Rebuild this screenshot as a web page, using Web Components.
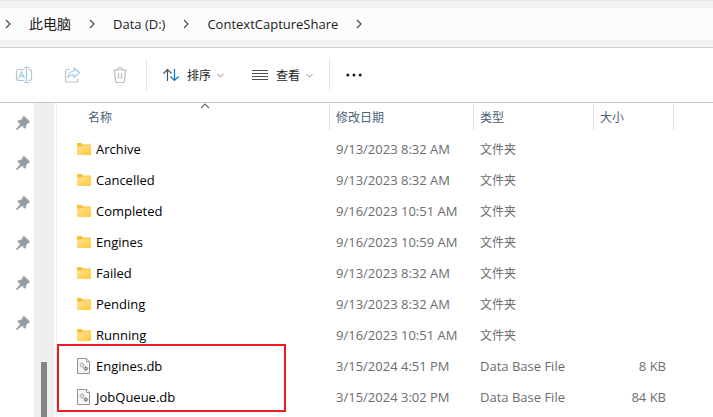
<!DOCTYPE html>
<html lang="zh-CN">
<head>
<meta charset="UTF-8">
<meta name="viewport" content="width=device-width, initial-scale=1.0">
<title>ContextCaptureShare</title>
<style>
  body {
    margin: 0;
    background: #fff;
    color: #1b1b1b;
    font-family: "Open Sans", "Noto Sans CJK SC", sans-serif;
    font-size: 12px;
  }
</style>
</head>
<body>
<file-explorer>
  <address-bar slot="address">
    <path-item lang="zh-CN">此电脑</path-item>
    <path-item lang="en">Data (D:)</path-item>
    <path-item lang="en">ContextCaptureShare</path-item>
  </address-bar>
  <command-bar slot="commands"></command-bar>
  <quick-pins slot="side" count="6"></quick-pins>
  <file-list slot="files"></file-list>
</file-explorer>

<script>
const ICONS = {
  chevron: `<svg width="6" height="10" viewBox="0 0 6 10" fill="none" stroke="#444" stroke-width="1.1"><path d="M1 1l4 4-4 4"/></svg>`,
  down: `<svg width="7" height="5" viewBox="0 0 7 5" fill="none" stroke="#888"><path d="M.5 1l3 3 3-3"/></svg>`,
  up: `<svg width="10" height="6" viewBox="0 0 10 6" fill="none" stroke="#666" stroke-width="1.1"><path d="M1 5l4-4 4 4"/></svg>`,
  rename: `<svg width="18" height="18" viewBox="0 0 18 18" fill="none"><path d="M9.5 3.5H4A2.500 2.500 0 0 0 1.500 6v6A2.500 2.500 0 0 0 4 14.500h5.500M13.500 3.500H14A2.500 2.500 0 0 1 16.500 6v6a2.500 2.500 0 0 1-2.500 2.500h-.5" stroke="#c3c3c3" stroke-width="1.2"/><path d="M3.500 12.500l3-7 3 7M4.500 10.200h4M11.500 1.500v15M9 1.500h5M9 16.500h5" stroke="#9fcdf0" stroke-width="1.2"/></svg>`,
  share: `<svg width="18" height="18" viewBox="0 0 18 18" fill="none" stroke-linejoin="round"><path d="M7 3.500H4.500a2 2 0 0 0-2 2v8.500a2 2 0 0 0 2 2h8.500a2 2 0 0 0 2-2v-1.500" stroke="#c3c3c3" stroke-width="1.2"/><path d="M11 2l5.500 4.800L11 11.500V9c-2.500-.2-4.500.5-6 2.500.3-3.500 2-6 6-6.500z" stroke="#9fcdf0" stroke-width="1.2"/></svg>`,
  trash: `<svg width="18" height="18" viewBox="0 0 18 18" fill="none" stroke="#bdbdbd" stroke-width="1.2"><path d="M2 4h14M6.500 4a2.500 2.500 0 0 1 5 0M3.500 4l1 11a1.500 1.500 0 0 0 1.500 1.500h6a1.500 1.500 0 0 0 1.500-1.500l1-11M7.500 7.500v5.500M10.500 7.500v5.500"/></svg>`,
  sort: `<svg width="16" height="14" viewBox="0 0 16 14" fill="none" stroke-width="1.2"><path d="M.5 5.500l4-4 4 4M4.500 1.500v11.500" stroke="#4d4d4d"/><path d="M7.500 8.500l4 4 4-4M11.500 1v11.500" stroke="#0078d4"/></svg>`,
  view: `<svg width="16" height="12" viewBox="0 0 16 12" stroke="#4d4d4d"><path d="M0 1.500h16M0 4.500h16M0 7.500h16M0 10.500h16"/></svg>`,
  more: `<svg width="16" height="4" viewBox="0 0 16 4" fill="#1b1b1b"><circle cx="1.800" cy="2" r="1.500"/><circle cx="8" cy="2" r="1.500"/><circle cx="14.200" cy="2" r="1.500"/></svg>`,
  pin: `<svg width="14" height="14" viewBox="0 0 14 14" fill="#929da5"><path d="M7 .6c.5-.6 1.200-.6 1.700-.1l4.800 4.700c.5.5.4 1.300-.3 1.600l-2.500 1.400-.9 3.600c-.2.8-1 .9-1.600.4L5.900 9.800 1.500 13.700l-1.400.2.300-1.300L4.200 8.200 1.900 5.900c-.5-.5-.4-1.300.4-1.500l3.300-.9z"/></svg>`,
  folder: `<svg width="16" height="16" viewBox="0 0 16 16"><defs><linearGradient id="g" x1="0" y1="0" x2="1" y2="1"><stop offset="0" stop-color="#ffe398"/><stop offset="1" stop-color="#ffc937"/></linearGradient></defs><path d="M1 3a1 1 0 0 1 1-1h3.300l1.500 1.500H14a1 1 0 0 1 1 1V8H1z" fill="#f9bd2c"/><path d="M1 5.500h4.500L7 4.500h7.200a.8.8 0 0 1 .8.8V13.200a.8.8 0 0 1-.8.8H1.800a.8.8 0 0 1-.8-.8z" fill="url(#g)"/></svg>`,
  db: `<svg width="16" height="16" viewBox="0 0 16 16"><path d="M1.500.5h9l3 3v12h-12z" fill="#f8f8f8" stroke="#919191"/><path d="M10.500.5v3h3" fill="#fff" stroke="#919191"/><circle cx="6" cy="7" r="1.500" fill="#fff" stroke="#a9b1ba" stroke-width="1.200"/><circle cx="6" cy="7" r="2.400" fill="none" stroke="#a9b1ba" stroke-width=".8" stroke-dasharray=".9 .985"/><circle cx="9.800" cy="10.500" r="1.200" fill="#ddd" stroke="#606468"/><circle cx="9.800" cy="10.500" r="2" fill="none" stroke="#606468" stroke-width=".7" stroke-dasharray=".8 .77"/></svg>`
};

class FileExplorer extends HTMLElement {
  connectedCallback() {
    this.attachShadow({ mode: 'open' });
    this.shadowRoot.innerHTML = `
      <style>
        :host {
          display: flex;
          flex-direction: column;
          min-height: 100vh;
        }
        .body {
          display: flex;
          flex: 1;
        }
        main {
          flex: 1;
          min-width: 0;
        }
        slot[name="side"] {
          display: flex;
        }
      </style>
      <slot name="address"></slot>
      <slot name="commands"></slot>
      <div class="body">
        <slot name="side"></slot>
        <main><slot name="files"></slot></main>
      </div>
    `;
  }
}

class AddressBar extends HTMLElement {
  connectedCallback() {
    this.attachShadow({ mode: 'open' });
    this.shadowRoot.innerHTML = `
      <style>
        :host {
          display: block;
          background: #f3f3f3;
          border-top: 1px solid #e6e6e6;
          border-bottom: 1px solid #d0d0d0;
          padding: 7px 0;
        }
        nav {
          display: flex;
          align-items: center;
          gap: 18px;
          height: 32px;
          padding-left: 5px;
          background: #fcfcfc;
        }
        svg { display: block; }
      </style>
      <nav aria-label="路径">${ICONS.chevron}<slot></slot></nav>
    `;
  }
}

class PathItem extends HTMLElement {
  connectedCallback() {
    this.attachShadow({ mode: 'open' });
    this.shadowRoot.innerHTML = `
      <style>
        :host {
          display: flex;
          align-items: center;
          gap: 18px;
          font-size: 14px;
        }
        :host([lang="en"]) { font-size: 13px; }
        a {
          color: #1b1b1b;
          line-height: 20px;
          text-decoration: none;
          white-space: nowrap;
        }
        svg { display: block; }
      </style>
      <a href="#"><slot></slot></a>${ICONS.chevron}
    `;
  }
}

class CommandBar extends HTMLElement {
  connectedCallback() {
    this.attachShadow({ mode: 'open' });
    this.shadowRoot.innerHTML = `
      <style>
        :host {
          display: flex;
          align-items: center;
          height: 54px;
          border-bottom: 1px solid #c4c4c4;
        }
        button {
          display: flex;
          align-items: center;
          justify-content: center;
          height: 32px;
          padding: 0;
          border: 0;
          background: none;
          color: #1b1b1b;
          font: inherit;
        }
        .icon { width: 48px; }
        .menu { padding: 0 8px; }
        .menu span { margin: 0 6px 0 8px; }
        .group {
          display: flex;
          gap: 12px;
          padding: 0 8px;
          margin-left: 2px;
          border: solid #e5e5e5;
          border-width: 0 1px;
        }
      </style>
      <button class="icon" aria-label="重命名" disabled>${ICONS.rename}</button>
      <button class="icon" aria-label="共享" disabled>${ICONS.share}</button>
      <button class="icon" aria-label="删除" disabled>${ICONS.trash}</button>
      <div class="group">
        <button class="menu">${ICONS.sort}<span>排序</span>${ICONS.down}</button>
        <button class="menu">${ICONS.view}<span>查看</span>${ICONS.down}</button>
      </div>
      <button class="icon" aria-label="更多">${ICONS.more}</button>
    `;
  }
}

class QuickPins extends HTMLElement {
  connectedCallback() {
    const count = Number(this.getAttribute('count'));
    this.attachShadow({ mode: 'open' });
    this.shadowRoot.innerHTML = `
      <style>
        :host {
          display: flex;
          border-right: 1px solid #ededed;
        }
        .pins {
          width: 34px;
        }
        .pin {
          display: flex;
          align-items: center;
          height: 40px;
          padding-left: 16px;
        }
        .track {
          display: flex;
          flex-direction: column;
          justify-content: flex-end;
          align-items: center;
          width: 20px;
          margin-right: 2px;
          background: #efefef;
        }
        .thumb {
          width: 6px;
          height: 55px;
          background: #858585;
        }
      </style>
      <div class="pins">${`<div class="pin">${ICONS.pin}</div>`.repeat(count)}</div>
      <div class="track"><div class="thumb"></div></div>
    `;
  }
}

const FILES = [
  ['Archive', '9/13/2023 8:32 AM'],
  ['Cancelled', '9/13/2023 8:32 AM'],
  ['Completed', '9/16/2023 10:51 AM'],
  ['Engines', '9/16/2023 10:59 AM'],
  ['Failed', '9/13/2023 8:32 AM'],
  ['Pending', '9/13/2023 8:32 AM'],
  ['Running', '9/16/2023 10:51 AM'],
  ['Engines.db', '3/15/2024 4:51 PM', '8 KB'],
  ['JobQueue.db', '3/15/2024 3:02 PM', '84 KB']
];

class FileList extends HTMLElement {
  connectedCallback() {
    const rows = FILES.map(([name, date, size]) => `
      <tr>
        <td><div class="name">${size ? ICONS.db : ICONS.folder}<span>${name}</span></div></td>
        <td>${date}</td>
        ${size ? '<td>Data Base File</td>' : '<td class="zh">文件夹</td>'}
        <td class="size">${size || ''}</td>
        <td></td>
      </tr>`).join('');
    this.attachShadow({ mode: 'open' });
    this.shadowRoot.innerHTML = `
      <style>
        :host {
          display: block;
          position: relative;
        }
        table {
          width: 100%;
          table-layout: fixed;
          border-collapse: separate;
          border-spacing: 0;
        }
        .c-name { width: 273px; }
        .c-date { width: 144px; }
        .c-type { width: 120px; }
        .c-size { width: 80px; }
        th {
          height: 27px;
          padding: 0 0 0 6px;
          border-right: 1px solid #e0e0e0;
          color: #4c607a;
          font-weight: normal;
          text-align: left;
          position: relative;
        }
        th:first-child { padding-left: 31px; }
        th:last-child { border: 0; }
        th svg {
          position: absolute;
          top: 0;
          left: 143px;
        }
        tbody::before {
          content: "";
          display: block;
          height: 3px;
        }
        td {
          height: 31px;
          padding: 0 0 0 6px;
          color: #6d6d6d;
          font-size: 13px;
          white-space: nowrap;
        }
        td:first-child { padding-left: 19px; }
        td.zh { font-size: 12px; }
        .name {
          display: flex;
          align-items: center;
          gap: 4px;
          color: #000;
        }
        td.size {
          padding-right: 8px;
          text-align: right;
        }
        /* red frame round the two database files */
        .mark {
          position: absolute;
          top: 241px;
          left: 0;
          width: 225px;
          height: 64px;
          border: 2px solid #ed1c24;
        }
      </style>
      <table>
        <colgroup><col class="c-name"><col class="c-date"><col class="c-type"><col class="c-size"><col></colgroup>
        <thead>
          <tr><th>名称${ICONS.up}</th><th>修改日期</th><th>类型</th><th>大小</th><th></th></tr>
        </thead>
        <tbody>${rows}</tbody>
      </table>
      <div class="mark"></div>
    `;
  }
}

customElements.define('file-explorer', FileExplorer);
customElements.define('address-bar', AddressBar);
customElements.define('path-item', PathItem);
customElements.define('command-bar', CommandBar);
customElements.define('quick-pins', QuickPins);
customElements.define('file-list', FileList);
</script>
</body>
</html>
